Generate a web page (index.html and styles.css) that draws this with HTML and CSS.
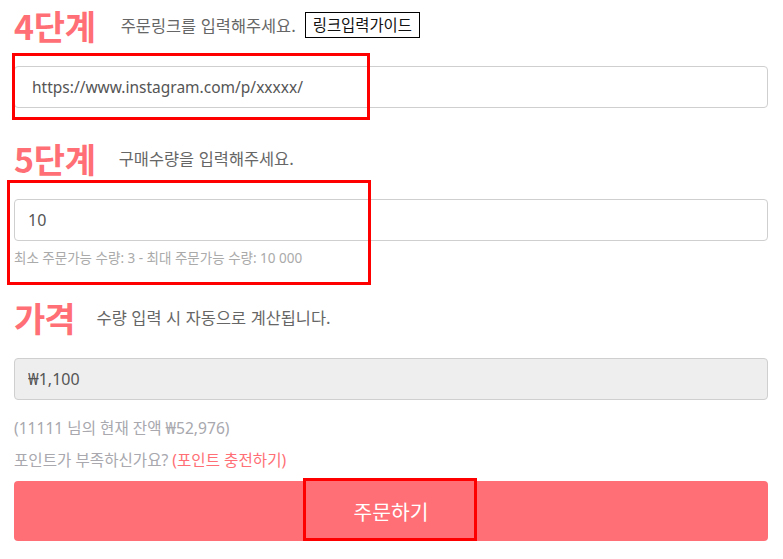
FILE: index.html
```html
<!DOCTYPE html>
<html lang="ko">
<head>
<meta charset="utf-8">
<title>주문</title>
<link rel="stylesheet" href="styles.css">
</head>
<body>
<div class="page">
  <div class="step-row">
    <span class="step-title">4단계</span>
    <span class="step-desc">주문링크를 입력해주세요.</span>
    <span class="guide-btn">링크입력가이드</span>
  </div>
  <div class="field">
    <input class="text-input text-input--url" type="text" value="https://www.instagram.com/p/xxxxx/">
    <div class="mark mark--link"></div>
  </div>

  <div class="step-row step-row--next">
    <span class="step-title">5단계</span>
    <span class="step-desc step-desc--tight">구매수량을 입력해주세요.</span>
  </div>
  <div class="field">
    <input class="text-input" type="text" value="10">
    <div class="hint">최소 주문가능 수량: 3 - 최대 주문가능 수량: 10 000</div>
    <div class="mark mark--qty"></div>
  </div>

  <div class="step-row step-row--price">
    <span class="step-title step-title--short">가격</span>
    <span class="step-desc">수량 입력 시 자동으로 계산됩니다.</span>
  </div>
  <div class="field">
    <input class="text-input text-input--readonly" type="text" value="₩1,100" readonly>
  </div>

  <p class="balance">(11111 님의 현재 잔액 ₩52,976)</p>
  <p class="points">포인트가 부족하신가요? <span class="points-link">(포인트 충전하기)</span></p>

  <div class="order">
    <button class="order-btn" type="button">주문하기</button>
    <div class="mark mark--btn"></div>
  </div>
</div>
</body>
</html>
```

FILE: styles.css
```css
* {
  box-sizing: border-box;
}

body {
  margin: 0;
  background: #ffffff;
  font-family: "Noto Sans", "Noto Sans CJK KR", sans-serif;
  color: #555;
}

.page {
  padding: 0 15px 0 14px;
}

.step-row {
  display: flex;
  align-items: center;
  height: 52px;
  margin-bottom: 14px;
}

.step-row--next {
  margin-top: 25px;
}

.step-row--price {
  margin-top: 24px;
}

.step-title {
  font-family: "Noto Sans CJK KR", sans-serif;
  font-weight: 700;
  font-size: 34px;
  color: #ff6f75;
  line-height: 1;
  letter-spacing: -0.3px;
  margin-right: 25px;
}

.step-title--short {
  margin-right: 22px;
  letter-spacing: -1px;
}

.step-desc {
  font-family: "Noto Sans CJK KR", sans-serif;
  font-size: 16.4px;
  color: #666;
  margin-top: -2px;
}

.step-desc--tight {
  margin-left: -2px;
}

.guide-btn {
  font-family: "Noto Sans CJK KR", sans-serif;
  font-size: 15.4px;
  color: #111;
  border: 1px solid #000;
  height: 26px;
  line-height: 23px;
  padding: 0 7px;
  margin-left: 9px;
  margin-top: -2px;
}

.field {
  position: relative;
}

.text-input {
  display: block;
  width: 100%;
  height: 42px;
  border: 1px solid #cfcfcf;
  border-radius: 4px;
  background: #fff;
  padding: 0 13px;
  font-family: "Noto Sans", "Noto Sans CJK KR", sans-serif;
  font-size: 16px;
  color: #555;
  outline: none;
}

.text-input--url {
  padding-left: 17px;
  font-size: 15.5px;
}

.text-input--readonly {
  background: #eeeeee;
}

.hint {
  margin-top: 7px;
  font-family: "Noto Sans", "Noto Sans CJK KR", sans-serif;
  font-size: 13.5px;
  line-height: 20px;
  color: #aaa;
}

.mark {
  position: absolute;
  border: 3px solid #ff0000;
  pointer-events: none;
}

.mark--link {
  left: -2px;
  top: -13px;
  width: 358px;
  height: 67px;
}

.mark--qty {
  left: -7px;
  top: -19px;
  width: 364px;
  height: 105px;
}

.balance,
.points {
  margin: 0;
  font-family: "Noto Sans", "Noto Sans CJK KR", sans-serif;
  font-size: 15.6px;
  line-height: 22px;
  color: #a8a8ae;
}

.balance {
  margin-top: 17px;
}

.points {
  margin-top: 10px;
}

.points-link {
  color: #ff6f75;
}

.order {
  position: relative;
  margin-top: 10px;
}

.order-btn {
  display: block;
  width: 100%;
  height: 60px;
  border: none;
  border-radius: 4px;
  background: #ff6f75;
  color: #fff;
  font-family: "Noto Sans CJK KR", sans-serif;
  font-size: 20.4px;
  cursor: pointer;
}

.mark--btn {
  left: 50%;
  transform: translateX(-50%);
  margin-left: -1px;
  top: -3px;
  width: 174px;
  height: 63px;
}
```
